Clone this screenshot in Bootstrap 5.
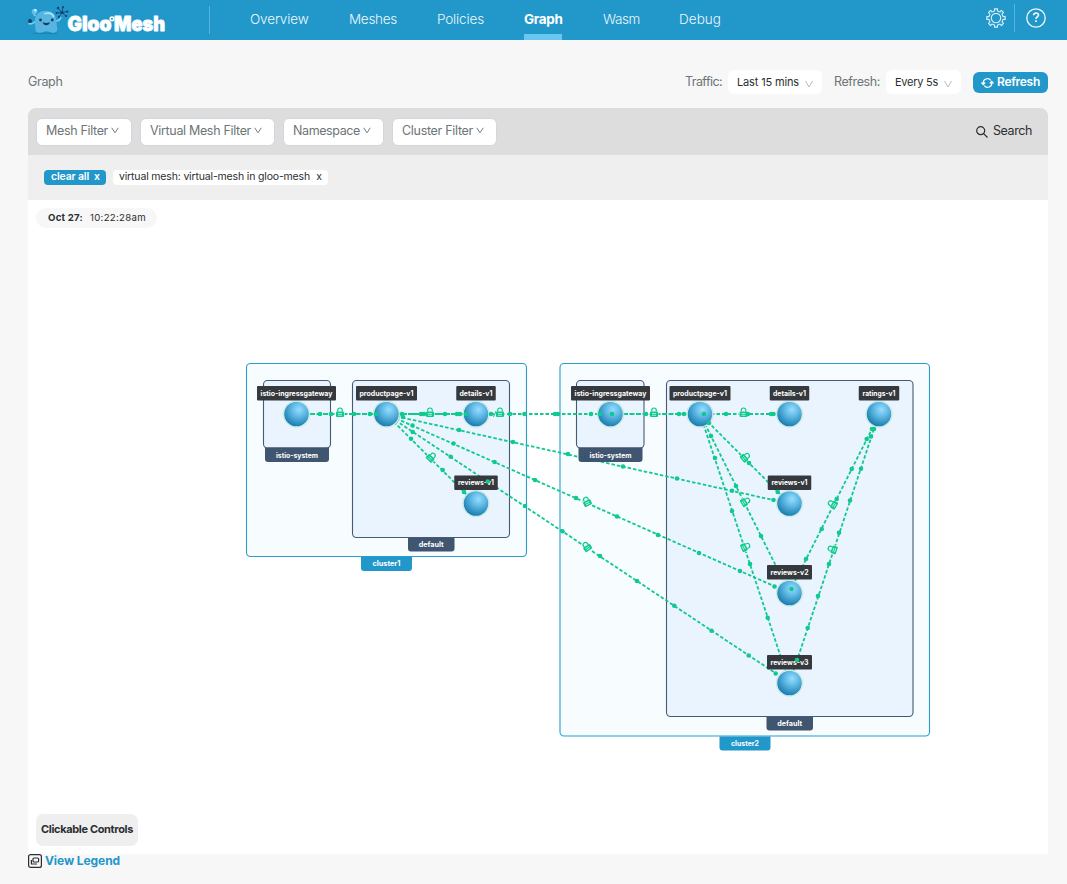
<!DOCTYPE html>
<html lang="en">
<head>
<meta charset="utf-8">
<meta name="viewport" content="width=device-width, initial-scale=1">
<title>Gloo Mesh - Graph</title>
<link rel="stylesheet" href="https://cdn.jsdelivr.net/npm/bootstrap@5.3.0/dist/css/bootstrap.min.css">
<style>
  body{font-family:Inter,"Liberation Sans",sans-serif;background:#f7f7f7;color:#2b2e31;font-size:13px;line-height:18px;width:1067px;height:884px;overflow:hidden}
  .gm-top{height:40px;background:#2297ca}
  .gm-brand{width:209px;padding-left:28px;height:40px}
  .gm-rule{width:1px;height:28px;background:#54b7e3}
  .gm-top .nav-link{padding:0;color:#ecf7fc;font-weight:300;font-size:13.5px;line-height:39px;height:40px;white-space:nowrap}
  .gm-top .nav-link.active{font-weight:700;color:#fff;box-shadow:inset 0 -6px #6ac7f0}
  .gm-head{height:68px;padding:30px 19px 0 28px;font-size:12.5px;color:#6e7477}
  .gm-select{height:24px;background:#fff;border-radius:6px;color:#2b2e31;font-size:11px;padding:0 9px}
  .gm-refresh{height:21px;width:75px;background:#2297ca;color:#fff;border-radius:6px;border:0;font-size:12px;font-weight:600;padding:0 8px 2px}
  .gm-panel{margin:0 19px 0 28px}
  .gm-filters{height:47px;background:#ddd;border-radius:8px 8px 0 0;padding:0 16px 0 8px}
  .gm-filter{height:28px;background:#fff;border:1px solid #d3d5df;border-radius:6px;color:#6e7477;font-size:12.5px;padding:0 8px 2px 9px;white-space:nowrap}
  .gm-tags{height:45px;background:#efefef;padding:0 16px}
  .gm-tag{height:15px;border-radius:4px;background:#fff;font-size:10.5px;line-height:13.5px;padding:0 6px;white-space:nowrap;color:#2b2e31}
  .gm-tag.gm-clear{background:#2297ca;color:#fff;font-weight:600;padding-left:7px}
  .gm-canvas{height:654px;background:#fff;position:relative}
  .gm-canvas>svg{display:block}
  .gm-time{position:absolute;left:8px;top:8px;width:121px;height:20px;border-radius:10px;background:#f7f7f7;font-size:9.6px;line-height:20px;padding-left:12px;white-space:nowrap}
  .gm-controls{position:absolute;left:8px;top:614px;width:102px;height:32px;border-radius:7px;background:#efefef;font-size:11px;font-weight:700;white-space:nowrap;padding:0 0 2px 5px}
  .gm-legend{margin-left:28px;height:14px;color:#2297ca;font-weight:700;font-size:12px;line-height:14px}
  svg text{font-family:Inter,sans-serif}
</style>
</head>
<body>
<header class="gm-top d-flex align-items-center">
  <div class="gm-brand flex-shrink-0">
    <svg width="140" height="40" viewBox="28 0 140 40" fill="none">
      <ellipse cx="45" cy="33.3" rx="13" ry=".8" fill="#1b83b5"/>
      <path d="M35.500 16Q33 14 34 11M36 21Q32 25 28.500 23.500M56 21q4 0 5-4" stroke="#7cd0f0" stroke-width="1.600"/>
      <path d="M34.800 22c0-7 4-11.200 10.700-11.200S56.300 15 56.300 21.500l.9 6c.5 3.700-1 5.300-4.700 5.300-2 0-3-1.500-6-1.500s-4 1.500-6 1.500c-4.500 0-5.700-2-5.200-5.500z" fill="#58b4e0"/>
      <path d="M45 13.500c4-1 7.500 0 8.500 3" stroke="#a9e4fa" stroke-width="1.800" stroke-linecap="round"/>
      <circle cx="34.500" cy="11.500" r="2.800" fill="#62bfe8"/><circle cx="35.300" cy="10.300" r="1.200" fill="#d4f3ff"/>
      <circle cx="30" cy="21" r="2" fill="#123e68"/>
      <circle cx="40.500" cy="20" r="1.400" fill="#103b62"/><circle cx="52.300" cy="20" r="1.400" fill="#103b62"/>
      <path d="M42.500 22.300q3.700 1.500 7.500 0-1 3-3.700 3t-3.800-3" fill="#103b62"/>
      <path d="M62 12.500l-4-4.500m4 4.500l1-5.500m-1 5.500l5.300-1M62 12.500l4 3.500m-4-3.500l-3 4.500m3-4.500l-5.500.500" stroke="#174e79" stroke-width="1"/>
      <g fill="#123e68"><circle cx="62" cy="12.500" r="1.500"/><circle cx="58" cy="8" r="1.200"/><circle cx="63" cy="7" r=".9"/><circle cx="67.300" cy="11.500" r="1.100"/><circle cx="66" cy="16" r="1.100"/><circle cx="59" cy="17" r="1.100"/><circle cx="56.500" cy="13" r=".9"/></g>
      <g fill="#fff" stroke="#fff" stroke-width=".8" stroke-linejoin="round" style="font-weight:900;font-size:19.500px">
        <text x="67.500" y="31" textLength="44" lengthAdjust="spacingAndGlyphs">Gloo</text>
        <text x="114" y="31" textLength="51" lengthAdjust="spacingAndGlyphs">Mesh</text>
      </g>
      <circle cx="112" cy="18.800" r="1.800" stroke="#fff" stroke-width="1.600"/>
    </svg>
  </div>
  <div class="gm-rule"></div>
  <nav class="nav flex-nowrap flex-grow-1">
    <a class="nav-link" style="margin-left:40px;width:99px">Overview</a>
    <a class="nav-link" style="width:88px">Meshes</a>
    <a class="nav-link" style="width:87px">Policies</a>
    <a class="nav-link active" style="width:38px;margin-right:41px">Graph</a>
    <a class="nav-link" style="width:76px">Wasm</a>
    <a class="nav-link">Debug</a>
  </nav>
  <svg width="20" height="20" viewBox="0 0 20 20" fill="none" stroke="#d9f0fa" stroke-width="1.150" stroke-linejoin="round" style="margin-top:-4px" id="gear"><circle cx="10" cy="10" r="4.700"/></svg>
  <div class="gm-rule" style="margin:-4px 11px 0 8px"></div>
  <svg width="20" height="20" viewBox="0 0 20 20" fill="none" stroke="#eef9fd" stroke-width="1.300" style="margin:-4px 21px 0 0"><circle cx="10" cy="10" r="9.200"/><path d="M7.700 7.300c0-3 4.800-3 4.800-.300 0 2-2.500 1.900-2.500 4M10 12.200v1.800" stroke-width="1.700"/></svg>
</header>

<div class="gm-head d-flex align-items-start">
  <span class="me-auto" style="padding-top:3px">Graph</span>
  <span style="padding-top:3px;width:43px" class="text-nowrap">Traffic:</span>
  <div class="gm-select d-flex align-items-center justify-content-between" style="width:94px"><span>Last 15 mins</span><svg width="8" height="8" viewBox="0 0 8 8" fill="none" stroke="#bbb" style="margin-top:4px"><path d="M.5 1L4 7 7.500 1"/></svg></div>
  <span style="padding-top:3px;width:52px;margin-left:12px" class="text-nowrap">Refresh:</span>
  <div class="gm-select d-flex align-items-center justify-content-between" style="width:75px"><span>Every 5s</span><svg width="8" height="8" viewBox="0 0 8 8" fill="none" stroke="#bbb" style="margin-top:4px"><path d="M.5 1L4 7 7.500 1"/></svg></div>
  <button class="gm-refresh d-flex align-items-center" style="margin:2px 0 0 12px"><svg class="flex-shrink-0" width="13" height="12" viewBox="0 0 13 12" fill="none" stroke="#fff" stroke-width="1.200" style="margin:2px 3px 0 0"><path d="M2.200 6.500A4.300 4.300 0 0 1 9.800 3.300M10.800 5.500A4.300 4.300 0 0 1 3.200 8.700"/><path d="M.5 5.500L2.200 7.500 4.200 5.500M8.800 6.500L10.800 4.500 12.500 6.500"/></svg><span class="gm-t" data-w="43">Refresh</span></button>
</div>

<main class="gm-panel">
  <div class="gm-filters d-flex align-items-center">
    <div class="gm-filter d-flex align-items-center" style="width:96px;margin-right:8px"><span class="gm-t" data-w="62">Mesh Filter</span><svg class="gm-v"></svg></div>
    <div class="gm-filter d-flex align-items-center" style="width:135px;margin-right:8px"><span class="gm-t" data-w="101">Virtual Mesh Filter</span><svg class="gm-v"></svg></div>
    <div class="gm-filter d-flex align-items-center" style="width:101px;margin-right:8px"><span class="gm-t" data-w="67">Namespace</span><svg class="gm-v"></svg></div>
    <div class="gm-filter d-flex align-items-center" style="width:105px"><span class="gm-t" data-w="71">Cluster Filter</span><svg class="gm-v"></svg></div>
    <svg class="ms-auto" width="12" height="12" viewBox="0 0 12 12" fill="none" stroke="#2b2e31" stroke-width="1.200"><circle cx="4.700" cy="4.700" r="4"/><path d="M7.600 7.600L11.500 11.500"/></svg>
    <span class="gm-t" data-w="39" style="margin-left:5px;padding-bottom:2px;font-size:12.500px">Search</span>
  </div>
  <div class="gm-tags d-flex align-items-center">
    <div class="gm-tag gm-clear d-flex justify-content-between" style="width:62px;margin-right:7px"><span class="gm-t" data-w="38">clear all</span><span>x</span></div>
    <div class="gm-tag d-flex justify-content-between" style="width:215px"><span class="gm-t" data-w="191">virtual mesh: virtual-mesh in gloo-mesh</span><span>x</span></div>
  </div>
  <div class="gm-canvas">
    <svg id="graph" width="1020" height="654" viewBox="28 200 1020 654" fill="none">
      <defs>
        <radialGradient id="ball" cx=".6" cy=".32" r=".72"><stop offset="0" stop-color="#97ddff"/><stop offset=".35" stop-color="#67bee9"/><stop offset="1" stop-color="#1479ac"/></radialGradient>
        <g id="lock"><rect x="-4" y="-1.500" width="8" height="5.500" rx="1" fill="#10c98e"/><path d="M-2.300-1.500v-1.200a2.300 2.300 0 0 1 4.600 0v1.200" stroke="#10c98e" stroke-width="1.200"/><path d="M-2 .5h4M-2 2.300h4" stroke="#e3f8f4" stroke-width=".7"/></g>
      </defs>
    </svg>
    <div class="gm-time"><b class="gm-t d-inline-block" data-w="35">Oct 27:</b><span class="gm-t d-inline-block" data-w="56" style="margin-left:7px">10:22:28am</span></div>
    <div class="gm-controls d-flex align-items-center"><span class="gm-t" data-w="92">Clickable Controls</span></div>
  </div>
</main>
<footer class="gm-legend d-flex align-items-center">
  <svg width="14" height="14" viewBox="0 0 14 14" fill="none" stroke="#2b2e31"><rect x=".6" y=".6" width="12.800" height="12.800" rx="2" stroke-width="1.200"/><rect x="5" y="4" width="5.600" height="4" rx="1" stroke-width="1.200"/><path d="M3.400 6v4h5.600" stroke-width="1.200"/></svg>
  <span class="gm-t" data-w="75" style="margin-left:3px">View Legend</span>
</footer>
<script src="https://cdn.jsdelivr.net/npm/bootstrap@5.3.0/dist/js/bootstrap.bundle.min.js"></script>
<script>
const NS='http://www.w3.org/2000/svg', G=document.getElementById('graph');
function add(p,tag,a,txt){const e=document.createElementNS(NS,tag);for(const k in a)e.setAttribute(k,a[k]);if(txt)e.textContent=txt;p.appendChild(e);return e}

// Cog outline with eight teeth
let d='';
for(let i=0;i<8;i++)[[-.42,7],[-.2,7.3],[-.17,9.3],[.17,9.3],[.2,7.3],[.42,7]].forEach(([o,r],j)=>{const t=i*Math.PI/4+o*.95;d+=(i||j?'L':'M')+(10+r*Math.sin(t)).toFixed(2)+' '+(10-r*Math.cos(t)).toFixed(2)});
add(document.getElementById('gear'),'path',{d:d+'Z'});

document.querySelectorAll('.gm-v').forEach(s=>{s.setAttribute('width',8);s.setAttribute('height',7);s.style.marginLeft='3px';add(s,'path',{d:'M.7 .8L4 5.800 7.300 .8',stroke:'#777d80',fill:'none'})});

// Spread the letters of a label over its column
function fit(e,w){e.style.whiteSpace='nowrap';e.style.letterSpacing='0';const r=document.createRange();r.selectNodeContents(e);e.style.letterSpacing=((w-r.getBoundingClientRect().width)/e.textContent.length).toFixed(3)+'px'}
document.querySelectorAll('.gm-t').forEach(e=>fit(e,+e.dataset.w));
[58.5,48,47,38.5,37,42].forEach((w,i)=>fit(document.querySelectorAll('.gm-top .nav-link')[i],w));
const hs=document.querySelectorAll('.gm-head span');[34.5,37,62,46,43].forEach((w,i)=>fit(hs[i],w));

// Clusters and namespaces: x, y, right, bottom, is cluster
[[246.5,363.5,526.5,556.5,1],[560,363.5,929.5,736,1],
 [263.5,380.5,330.5,448,0],[352.5,380.5,509.5,537.5,0],[576.5,380.5,644,448,0],[666.5,380.5,913,716.5,0]]
.forEach(([x,y,r,b,c])=>{
  add(G,'rect',{x,y,width:r-x,height:b-y,rx:4,fill:c?'#f7fcff':'#eaf4fe',stroke:c?'#2a9bcb':'#455b75','stroke-width':1.1});
});
// Workloads: name, centre, caption width, text width
const N=[['istio-ingressgateway',296.5,414,79,72],['productpage-v1',386.5,414,61,54],['details-v1',476,414,39.5,33],['reviews-v1',476,503.5,43.5,36],
 ['istio-ingressgateway',610.5,414,79,72],['productpage-v1',700,414,61,54],['details-v1',789.5,414,39.5,33],['reviews-v1',789.5,503.5,43.5,36],
 ['reviews-v2',789.5,593,45,38],['reviews-v3',789.5,683,45,38],['ratings-v1',879,414,40.5,33]];
[[310,414,386,414],[386,414,610,414],[610,414,700,414],[700,414,776,414],[386,414,474,502],[386,414,773,500],[386,414,775,586.5],[386,414,776,673.5],
 [700,414,788,502],[700,414,789.5,593],[700,414,789.5,683],[789.5,592,872,429],[789.5,683,874,429]]
.forEach(([x1,y1,x2,y2],i)=>add(G,'line',{x1,y1,x2,y2,stroke:'#10c98e','stroke-width':1.8,'stroke-dasharray':i==0||i==2?'5 1.500':'3.500 2'}));
add(G,'path',{d:'M400 414H465',stroke:'#10c98e','stroke-width':2,'stroke-dasharray':'7 1.500'});
[[340,413,0],[430,413,0],[500,413,0],[654,413,0],[743.5,413,0],[431,457.5,45],[587,502,-25],[587,547,-35],[587,457,0],[745,457.5,50],[745,502,60],[745,547,65],[833,504.5,-60],[833,549.5,-70]]
.forEach(([x,y,a])=>{add(G,'circle',{cx:x,cy:y,r:4.8,fill:'#edf9fc'});add(G,'use',{href:'#lock',transform:`translate(${x} ${y}) rotate(${a})`})});
add(G,'path',{d:'M493.500 417l2.500-6',stroke:'#10c98e'});
function caption(cx,y,t,tw){add(G,'text',{x:cx,y,'text-anchor':'middle','font-size':7.2,'font-weight':700,fill:'#fff',textLength:tw,lengthAdjust:'spacingAndGlyphs'},t)}
[[361,557,51,14,'cluster1',28,1],[719.5,736.5,51,14,'cluster2',28,1],[265,447.5,64,14.5,'istio-system',42,0],[408,538,46.5,13.5,'default',25,0],[578.5,447.5,64,14.5,'istio-system',42,0],[766.5,717,46.5,13.5,'default',25,0]]
.forEach(([x,y,w,h,t,tw,c])=>{add(G,'path',{d:`M${x} ${y}h${w}v${h-3}q0 3-3 3h${-w+6}q-3 0-3-3z`,fill:c?'#2297ca':'#3a506b','fill-opacity':c?1:.97});caption(x+w/2,h>14?y+10.3:y+9.2,t,tw)});
N.forEach(([t,x,y])=>{add(G,'circle',{cx:x,cy:y,r:13.3,fill:'#f3fbfb',stroke:'#b5e5d3','stroke-width':.8});add(G,'circle',{cx:x,cy:y,r:12.3,fill:'url(#ball)'})});
N.forEach(([t,x,y,w,tw])=>{add(G,'rect',{x:x-w/2,y:y-28,width:w,height:14.5,rx:1,fill:'#35393d'});caption(x,y-18.5,t,tw)});
// Packets travelling along the edges
[[320,414],[331,414],[354,414],[370,414],[376,414],[402,414],[421,414],[424,414],[445,414],[457,414],[460,414],[466,414],[491,414],[510,414],[524.5,414],[555,414],[558,414],[591,414],[600,414],[612,414],[646,414],[679,414],[684,414],[704,414],[726,414],[748,414],[771,414],[773.5,414],
[403,417],[459,430],[513,442],[568,454],[623,466.5],[677,478.5],[732,490.7],[773.5,500],
[412.5,425.5],[453.5,443.5],[494.6,462],[535,480],[576,498],[617,516.5],[658,535],[699,553],[740,571],[774.5,586.5],
[412.7,432],[450.7,456.7],[487.7,481.5],[525,506],[562.5,531.3],[600,556],[637,581],[674.3,605.7],[711.5,630.7],[748.7,655.5],[775.7,673.5],
[411,438.7],[442.7,470],[464,492],[709,423],[749,463],[777.7,492],[711,436],[736,486],[761,536],[715,458],[732,511],[750,564],[767.7,617.7],
[806,559],[821.7,529],[836.7,499],[851.7,469],[866.7,439],[872,429],[791.5,589],[797,660],[807.7,628],[818,596],[829,564],[839,532.7],[850,500.5],[861,468.7],[871,436.5],[874,429]]
.forEach(([cx,cy])=>add(G,'circle',{cx,cy,r:2.3,fill:'#10c98e'}));
</script>
</body>
</html>
